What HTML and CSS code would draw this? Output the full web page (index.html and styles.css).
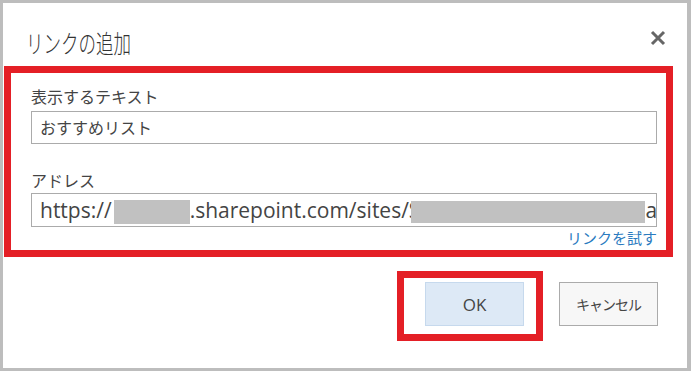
FILE: index.html
```html
<!DOCTYPE html>
<html lang="ja">
<head>
    <meta charset="UTF-8">
    <meta name="viewport" content="width=device-width, initial-scale=1.0">
    <title>リンクの追加</title>
    <link rel="stylesheet" href="styles.css">
</head>
<body>

<div class="dialog">
    <div class="dialog-header">
        <h1 class="dialog-title">リンクの追加</h1>
        <span class="close-btn" aria-label="閉じる">
            <svg width="16" height="16" viewBox="0 0 16 16">
                <path d="M2 2 L14 14 M14 2 L2 14" stroke="#666" stroke-width="3" fill="none"/>
            </svg>
        </span>
    </div>

    <div class="highlight form-area">
        <div class="form-group">
            <label class="field-label">表示するテキスト</label>
            <div class="field">おすすめリスト</div>
        </div>
        <div class="form-group second">
            <label class="field-label">アドレス</label>
            <div class="field url-field">https://<span class="redact short"></span>.sharepoint.com/sites/S<span class="redact long"></span>a</div>
        </div>
        <div class="try-link"><a href="#">リンクを試す</a></div>
    </div>

    <div class="dialog-footer">
        <div class="highlight ok-wrap">
            <button type="button" class="btn btn-ok">OK</button>
        </div>
        <button type="button" class="btn btn-cancel">キャンセル</button>
    </div>
</div>

</body>
</html>
```

FILE: styles.css
```css
body {
    margin: 0;
    background-color: #bdbdbd;
    font-family: "Noto Sans CJK JP", "Noto Sans", sans-serif;
    color: #444;
}
.dialog {
    margin: 3px 4px 0 3px;
    height: 365px;
    background: #fff;
    padding-left: 1px;
    box-sizing: border-box;
}
.dialog-header {
    display: flex;
    justify-content: space-between;
    align-items: flex-start;
    padding: 25px 21px 0 22px;
    margin-bottom: 10px;
    height: 28px;
}
.dialog-title {
    display: inline-block;
    margin: 0;
    font-size: 25px;
    line-height: 28px;
    font-weight: 300;
    color: #333;
    transform: scaleX(0.7);
    transform-origin: left center;
}
.close-btn {
    display: block;
    width: 16px;
    height: 16px;
    margin-top: 2px;
}
.close-btn svg {
    display: block;
}
.highlight {
    border: 7px solid #e41f26;
    box-sizing: border-box;
}
.form-area {
    width: 669px;
    height: 191px;
    padding: 12px 9px 0 20px;
}
.field-label {
    display: block;
    font-size: 16px;
    line-height: 22px;
    margin-bottom: 4px;
}
.second {
    margin-top: 25px;
}
.second .field-label {
    margin-bottom: 2px;
}
.field {
    height: 33px;
    box-sizing: border-box;
    border: 1px solid #ababab;
    padding: 0 8px;
    font-size: 16px;
    line-height: 31px;
    white-space: nowrap;
    overflow: hidden;
}
.url-field {
    height: 34px;
    padding-right: 0;
    font-family: "Open Sans", "Noto Sans", sans-serif;
    font-size: 21px;
    line-height: 32px;
}
.redact {
    display: inline-block;
    height: 24px;
    background: #c1c1c1;
    vertical-align: middle;
}
.redact.short {
    width: 76px;
    margin-left: 2px;
}
.redact.long {
    width: 234px;
    height: 22px;
    margin-left: -9px;
}
.try-link {
    text-align: right;
    font-size: 15px;
    line-height: 20px;
    margin-top: 1px;
}
.try-link a {
    color: #2b7bbf;
    text-decoration: none;
}
.dialog-footer {
    display: flex;
    justify-content: flex-end;
    align-items: flex-start;
    gap: 16px;
    margin-top: 14px;
    padding-right: 29px;
}
.ok-wrap {
    padding: 4px 12px 8px 21px;
}
.btn {
    display: block;
    width: 99px;
    height: 44px;
    box-sizing: border-box;
    color: #444;
    cursor: pointer;
}
.btn-ok {
    background-color: #dde9f6;
    border: 1px solid #c6d9ed;
    font-family: "Open Sans", "Noto Sans", sans-serif;
    font-size: 17px;
}
.btn-cancel {
    margin-top: 11px;
    background-color: #f7f7f7;
    border: 1px solid #ababab;
    font-family: "Noto Sans CJK JP", sans-serif;
    font-size: 14px;
    letter-spacing: -1px;
}
```
